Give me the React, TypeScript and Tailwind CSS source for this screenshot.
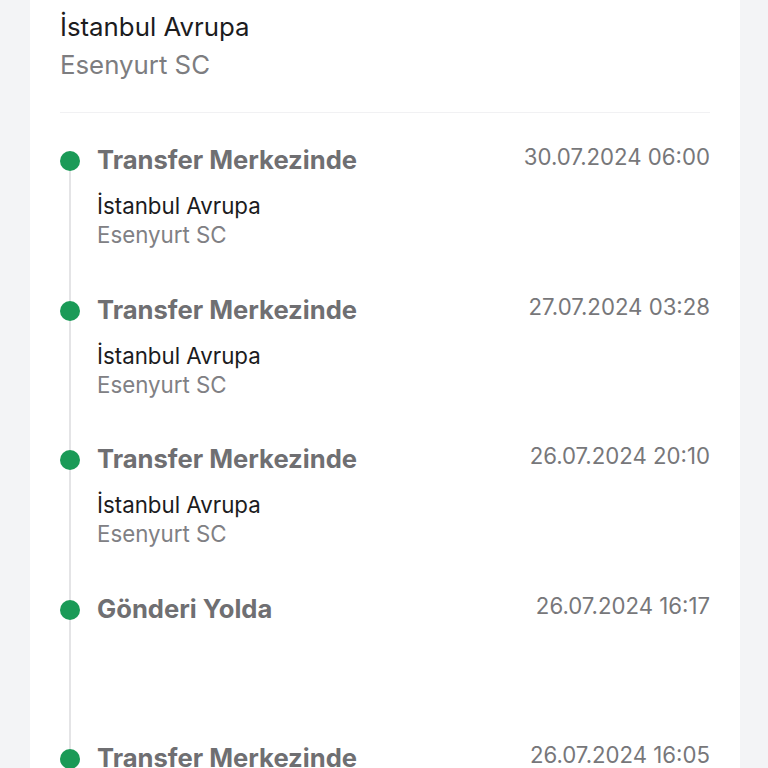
import React from 'react';

type Step = {
  title: string;
  date: string;
  city?: string;
  branch?: string;
};

const steps: Step[] = [
  { title: 'Transfer Merkezinde', date: '30.07.2024 06:00', city: 'İstanbul Avrupa', branch: 'Esenyurt SC' },
  { title: 'Transfer Merkezinde', date: '27.07.2024 03:28', city: 'İstanbul Avrupa', branch: 'Esenyurt SC' },
  { title: 'Transfer Merkezinde', date: '26.07.2024 20:10', city: 'İstanbul Avrupa', branch: 'Esenyurt SC' },
  { title: 'Gönderi Yolda', date: '26.07.2024 16:17' },
  { title: 'Transfer Merkezinde', date: '26.07.2024 16:05', city: 'İstanbul Avrupa', branch: 'Esenyurt SC' },
];

const TimelineItem: React.FC<{ step: Step; first: boolean }> = ({ step, first }) => (
  <div className="flex h-[149.5px]">
    <div className="flex w-[20px] flex-col items-center">
      <div className={`h-[7px] w-[2px] ${first ? 'bg-transparent' : 'bg-[#e4e4e6]'}`} />
      <div className="h-[20px] w-[20px] rounded-full bg-[#1a9a57]" />
      <div className="w-[2px] flex-1 bg-[#e4e4e6]" />
    </div>
    <div className="ml-[17px] flex-1">
      <div className="flex items-start justify-between">
        <span className="text-[25.6px] leading-[32px] font-bold text-[#6f6f72]">{step.title}</span>
        <span className="text-[22.2px] leading-[26px] text-[#77777a]">{step.date}</span>
      </div>
      {step.city && (
        <div className="mt-[15px] text-[22.3px] leading-[29px]">
          <div className="text-[#1c1c1e]">{step.city}</div>
          <div className="text-[#808084]">{step.branch}</div>
        </div>
      )}
    </div>
  </div>
);

const App: React.FC = () => {
  return (
    <div className="h-screen overflow-hidden bg-[#f3f4f6]" style={{ fontFamily: 'Inter, "Noto Sans", sans-serif' }}>
      <div className="ml-[30px] w-[710px] bg-white px-[30px] pb-10">
        <div className="pt-[8px] text-[25.8px] leading-[38px]">
          <div className="text-[#1c1c1e]">İstanbul Avrupa</div>
          <div className="text-[#7d7d80]">Esenyurt SC</div>
        </div>
        <div className="mt-[28px] h-px bg-[#f1f1f3]" />
        <div className="pt-[31px]">
          {steps.map((step, i) => (
            <TimelineItem key={i} step={step} first={i === 0} />
          ))}
        </div>
      </div>
    </div>
  );
};

export default App;
